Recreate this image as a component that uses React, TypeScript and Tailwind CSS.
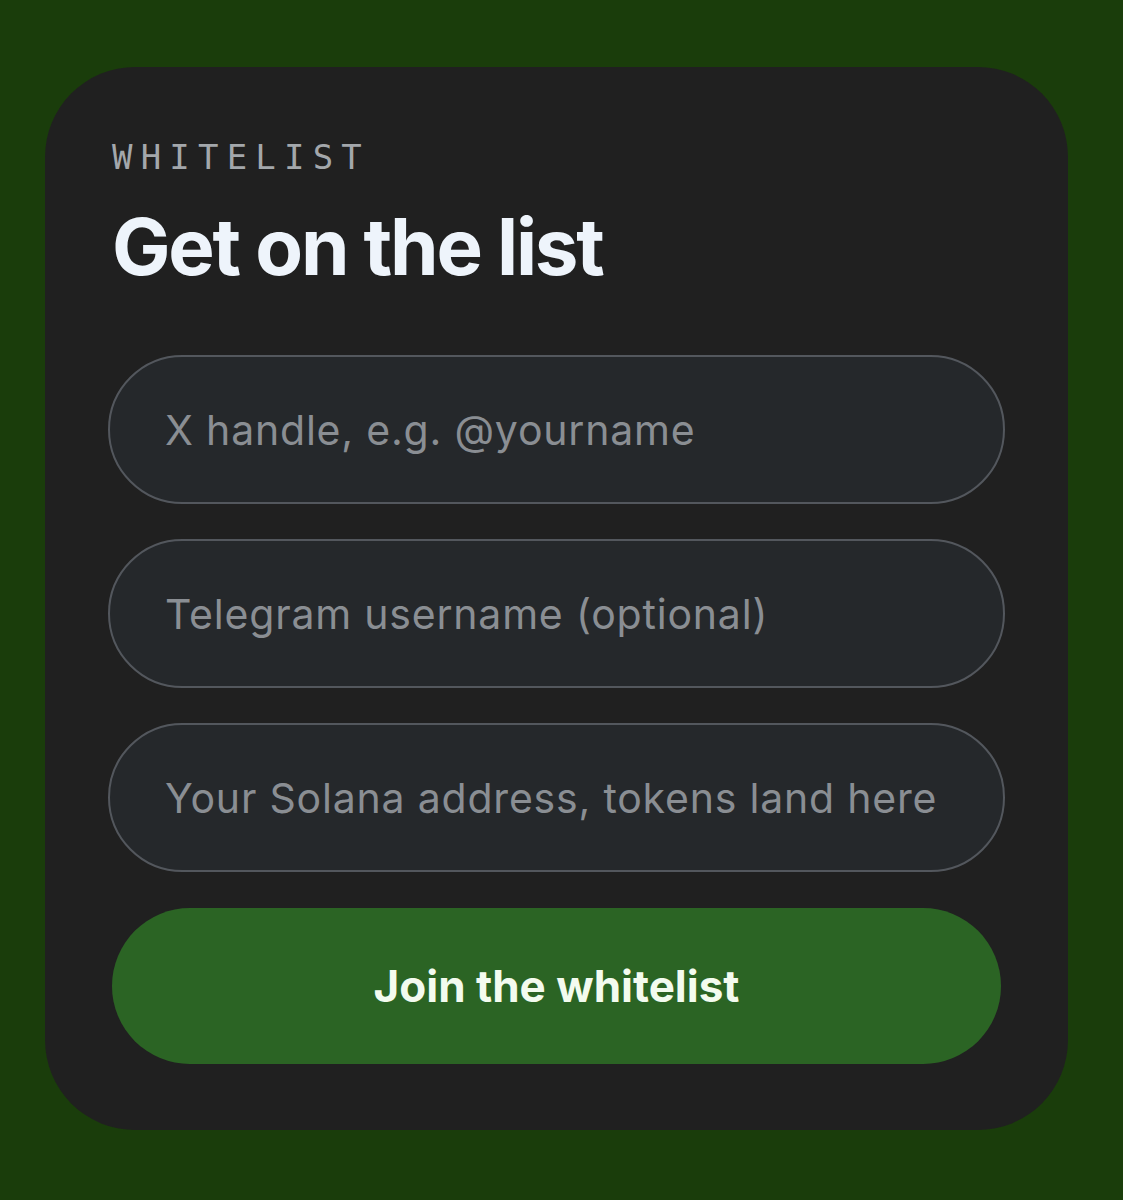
const fields = [
  'X handle, e.g. @yourname',
  'Telegram username (optional)',
  'Your Solana address, tokens land here',
];

export default function App() {
  return (
    <div className="min-h-[1200px] w-[1123px] bg-[#1a3d0b] pl-[45px] pt-[67px] font-['Inter',sans-serif]">
      <div className="flex h-[1063px] w-[1023px] flex-col rounded-[90px] bg-[#202020] px-[63px] pt-[73px]">
        <div className="pl-[4px] font-['DejaVu_Sans_Mono',monospace] text-[34px] leading-none tracking-[8.2px] text-[#a3a7ab]">
          WHITELIST
        </div>
        <h1 className="mt-[34px] pl-[4px] text-[78px] font-bold leading-none tracking-[-2.2px] text-[#eef4fb]">
          Get on the list
        </h1>
        <form className="mt-[69px] flex flex-col gap-[35px]" onSubmit={(e) => e.preventDefault()}>
          {fields.map((f) => (
            <input
              key={f}
              placeholder={f}
              className="h-[149px] w-full rounded-full border-2 border-[#53575d] bg-[#25282b] px-[55px] text-[41px] tracking-[0.8px] text-[#e5e7eb] outline-none placeholder:text-[#8a8e93]"
            />
          ))}
          <button
            type="submit"
            className="mx-[4px] mt-[1px] h-[156px] rounded-full bg-[#2b6424] text-[44px] font-bold text-[#f3fbef]"
          >
            Join the whitelist
          </button>
        </form>
      </div>
    </div>
  );
}
